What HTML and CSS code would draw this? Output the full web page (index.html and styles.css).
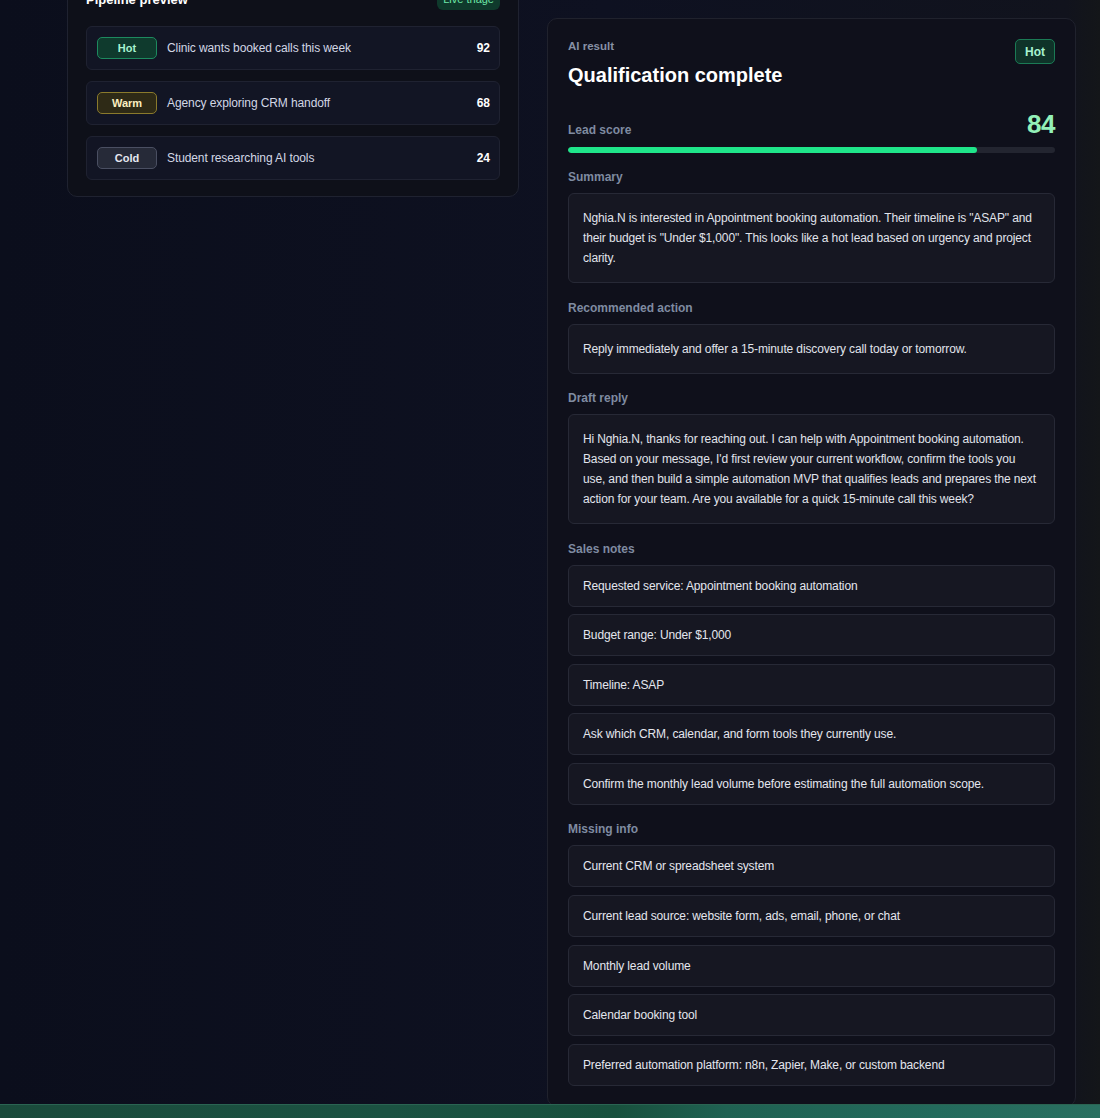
FILE: index.html
```html
<!DOCTYPE html>
<html lang="en">

<head>
  <meta charset="UTF-8" />
  <meta name="viewport" content="width=device-width, initial-scale=1.0" />
  <title>Lead Qualifier</title>
  <link rel="stylesheet" href="styles.css">
</head>

<body>
  <div class="page">
    <div class="layout">

      <!-- Left column: pipeline preview -->
      <div class="card pipeline">
        <div class="card-head">
          <span class="card-title">Pipeline preview</span>
          <span class="pill">Live triage</span>
        </div>
        <div class="rows">
          <div class="row">
            <span class="badge hot">Hot</span>
            <span class="row-text">Clinic wants booked calls this week</span>
            <span class="row-score">92</span>
          </div>
          <div class="row">
            <span class="badge warm">Warm</span>
            <span class="row-text">Agency exploring CRM handoff</span>
            <span class="row-score">68</span>
          </div>
          <div class="row">
            <span class="badge cold">Cold</span>
            <span class="row-text">Student researching AI tools</span>
            <span class="row-score">24</span>
          </div>
        </div>
      </div>

      <!-- Right column: AI result -->
      <div class="card result">
        <div class="result-head">
          <div>
            <div class="eyebrow">AI result</div>
            <h1 class="result-title">Qualification complete</h1>
          </div>
          <span class="tag hot">Hot</span>
        </div>

        <div class="score-row">
          <span class="label">Lead score</span>
          <span class="score">84</span>
        </div>
        <div class="bar"><div class="bar-fill" style="width: 84%"></div></div>

        <div class="section">
          <div class="label">Summary</div>
          <div class="box">Nghia.N is interested in Appointment booking automation. Their timeline is "ASAP" and their budget is "Under $1,000". This looks like a hot lead based on urgency and project clarity.</div>
        </div>

        <div class="section">
          <div class="label">Recommended action</div>
          <div class="box">Reply immediately and offer a 15-minute discovery call today or tomorrow.</div>
        </div>

        <div class="section">
          <div class="label">Draft reply</div>
          <div class="box">Hi Nghia.N, thanks for reaching out. I can help with Appointment booking automation. Based on your message, I'd first review your current workflow, confirm the tools you use, and then build a simple automation MVP that qualifies leads and prepares the next action for your team. Are you available for a quick 15-minute call this week?</div>
        </div>

        <div class="section">
          <div class="label">Sales notes</div>
          <ul class="items">
            <li>Requested service: Appointment booking automation</li>
            <li>Budget range: Under $1,000</li>
            <li>Timeline: ASAP</li>
            <li>Ask which CRM, calendar, and form tools they currently use.</li>
            <li>Confirm the monthly lead volume before estimating the full automation scope.</li>
          </ul>
        </div>

        <div class="section">
          <div class="label">Missing info</div>
          <ul class="items">
            <li>Current CRM or spreadsheet system</li>
            <li>Current lead source: website form, ads, email, phone, or chat</li>
            <li>Monthly lead volume</li>
            <li>Calendar booking tool</li>
            <li>Preferred automation platform: n8n, Zapier, Make, or custom backend</li>
          </ul>
        </div>
      </div>

    </div>
  </div>
  <div class="cta-band"></div>
</body>

</html>
```

FILE: styles.css
```css
body {
  font-family: "Liberation Sans", Arial, sans-serif;
  margin: 0;
  padding: 0;
  color: #e3e6ee;
  background: #0f1120;
}

.page {
  height: 1104px;
  overflow: hidden;
  background: linear-gradient(90deg, #0b0e1c 0%, #0e1121 55%, #11131d 97%, #141619 100%);
}

.layout {
  display: grid;
  grid-template-columns: 452px 529px;
  gap: 28px;
  align-items: start;
  padding: 0 24px 0 67px;
}

.card {
  border: 1px solid #1f2230;
  border-radius: 10px;
  background: #0e1019;
}

/* Pipeline preview */
.pipeline {
  margin-top: -29px;
  padding: 16px 18px;
}

.card-head {
  display: flex;
  justify-content: space-between;
  align-items: center;
  margin-bottom: 16px;
}

.card-title {
  font-size: 13px;
  font-weight: bold;
  color: #ffffff;
}

.pill {
  display: inline-flex;
  align-items: center;
  height: 22px;
  padding: 0 6px;
  border-radius: 6px;
  background: #0f3a2c;
  color: #6ee7a7;
  font-size: 11px;
}

.rows {
  display: flex;
  flex-direction: column;
  gap: 11px;
}

.row {
  display: flex;
  align-items: center;
  gap: 10px;
  padding: 10px 9px 10px 10px;
  border: 1px solid #1f2231;
  border-radius: 6px;
  background: #121524;
}

.badge {
  display: inline-flex;
  justify-content: center;
  align-items: center;
  box-sizing: border-box;
  width: 60px;
  height: 22px;
  border-radius: 5px;
  font-size: 11px;
  font-weight: bold;
}

.badge.hot {
  background: #0f3a2d;
  border: 1px solid #1d8a5f;
  color: #a7f3d0;
}

.badge.warm {
  background: #2e2a16;
  border: 1px solid #8a7a2c;
  color: #fbefc0;
}

.badge.cold {
  background: #262a38;
  border: 1px solid #4a4f62;
  color: #e5e7ef;
}

.row-text {
  flex: 1;
  font-size: 12px;
  letter-spacing: -0.1px;
  color: #d3d7e4;
}

.row-score {
  font-size: 12px;
  font-weight: bold;
  color: #ffffff;
}

/* AI result */
.result {
  margin-top: 18px;
  padding: 20px;
  background: #0f101b;
  border-color: #20222d;
}

.result-head {
  display: flex;
  justify-content: space-between;
  align-items: flex-start;
}

.eyebrow {
  font-size: 11.5px;
  font-weight: bold;
  line-height: 14px;
  color: #8791a5;
}

.result-title {
  margin: 8px 0 0;
  font-size: 20px;
  line-height: 28px;
  color: #ffffff;
}

.tag {
  display: inline-flex;
  align-items: center;
  height: 25px;
  box-sizing: border-box;
  padding: 0 9px;
  border-radius: 5px;
  font-size: 12px;
  font-weight: bold;
}

.tag.hot {
  background: #0f3329;
  border: 1px solid #1b7a55;
  color: #a7f3d0;
}

.score-row {
  display: flex;
  justify-content: space-between;
  align-items: flex-end;
  margin-top: 20px;
}

.score {
  font-size: 26px;
  font-weight: bold;
  line-height: 30px;
  color: #93f0b8;
  letter-spacing: -0.5px;
}

.score-row .label {
  margin-bottom: 1px;
}

.bar {
  height: 6px;
  margin-top: 8px;
  border-radius: 3px;
  background: #232530;
  overflow: hidden;
}

.bar-fill {
  height: 100%;
  border-radius: 3px;
  background: #1fe58a;
}

.label {
  font-size: 12px;
  font-weight: bold;
  line-height: 16px;
  color: #7f8ba1;
}

.section {
  margin-top: 16.4px;
}

.section .label {
  margin-bottom: 8px;
}

.box {
  padding: 14px;
  border: 1px solid #272936;
  border-radius: 6px;
  background: #161722;
  font-size: 12px;
  line-height: 20px;
  letter-spacing: -0.13px;
  color: #e1e4ec;
}

.items {
  list-style: none;
  margin: 0;
  padding: 0;
  display: flex;
  flex-direction: column;
  gap: 7.6px;
}

.items li {
  padding: 10px 14px;
  border: 1px solid #272936;
  border-radius: 6px;
  background: #161722;
  font-size: 12px;
  line-height: 20px;
  letter-spacing: -0.13px;
  color: #e4e6ee;
}

.cta-band {
  height: 40px;
  border-top: 1px solid #2a6452;
  background: linear-gradient(90deg, #1a4a3b 0%, #1b5242 35%, #18503d 56%, #1f6152 66%, #236a5c 85%, #2a6f60 100%);
}
```
